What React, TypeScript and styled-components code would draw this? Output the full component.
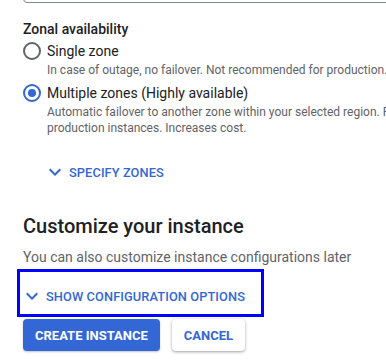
import React, { useState } from "react";
import styled, { createGlobalStyle } from "styled-components";

const GlobalStyle = createGlobalStyle`
	body {
		margin: 0;
		background: #ffffff;
		font-family: Roboto, "Liberation Sans", Arial, sans-serif;
		overflow: hidden;
	}
`;

const Page = styled.div`
	width: 386px;
	height: 364px;
	overflow: hidden;
	padding-left: 23px;
	box-sizing: border-box;
	color: #202124;
`;

const FieldEdge = styled.div`
	width: 520px;
	height: 36px;
	margin-top: -33px;
	border: 1px solid #80868b;
	border-radius: 4px;
	box-sizing: border-box;
	flex-shrink: 0;
`;

const Label = styled.div`
	margin-top: 16px;
	font-size: 14px;
	line-height: 20px;
	font-weight: 500;
`;

const Option = styled.label<{ $gap: number }>`
	display: flex;
	align-items: center;
	gap: 6px;
	margin-top: ${(p) => p.$gap}px;
	font-size: 14px;
	line-height: 20px;
	cursor: pointer;
	white-space: nowrap;
`;

const Radio = styled.span<{ $checked: boolean }>`
	width: 18px;
	height: 18px;
	border-radius: 50%;
	box-sizing: border-box;
	border: 2px solid ${(p) => (p.$checked ? "#3367d6" : "#5f6368")};
	display: flex;
	align-items: center;
	justify-content: center;

	&::after {
		content: "";
		width: 8px;
		height: 8px;
		border-radius: 50%;
		background: ${(p) => (p.$checked ? "#3367d6" : "transparent")};
	}
`;

const Hint = styled.div`
	margin-top: 1px;
	margin-left: 24px;
	width: 460px;
	font-size: 12px;
	line-height: 16px;
	color: #5f6368;
`;

const ExpandButton = styled.button<{ $outlined?: boolean }>`
	display: flex;
	align-items: center;
	gap: 2px;
	height: ${(p) => (p.$outlined ? "48px" : "36px")};
	padding: ${(p) => (p.$outlined ? "6px 16px 0 0" : "0 8px 0 0")};
	margin: ${(p) => (p.$outlined ? "2px 0 0 -6px" : "18px 0 0 20px")};
	border: ${(p) => (p.$outlined ? "3px solid #0000ff" : "none")};
	box-sizing: border-box;
	background: transparent;
	color: #3367d6;
	font-family: Roboto, "Liberation Sans", Arial, sans-serif;
	font-size: 12.8px;
	font-weight: 500;
	letter-spacing: 0.1px;
	text-transform: uppercase;
	cursor: pointer;
	align-self: flex-start;

	svg {
		width: 24px;
		height: 24px;
		fill: #3367d6;
		flex-shrink: 0;
	}
`;

const Heading = styled.h2`
	margin: 22px 0 0;
	font-size: 20px;
	line-height: 28px;
	font-weight: 500;
`;

const Subtext = styled.p`
	margin: 7px 0 0;
	font-size: 14px;
	line-height: 20px;
	color: #5f6368;
`;

const Actions = styled.div`
	display: flex;
	gap: 12px;
	margin-top: 2px;
`;

const ActionButton = styled.button<{ $primary?: boolean }>`
	height: 32px;
	padding: 0 12px;
	border: none;
	border-radius: 4px;
	font-family: Roboto, "Liberation Sans", Arial, sans-serif;
	font-size: 13px;
	font-weight: 700;
	letter-spacing: 0;
	text-transform: uppercase;
	cursor: pointer;
	background: ${(p) => (p.$primary ? "#3367d6" : "#ffffff")};
	color: ${(p) => (p.$primary ? "#ffffff" : "#3367d6")};
	box-shadow: ${(p) =>
		p.$primary
			? "0 1px 2px rgba(60,64,67,0.3)"
			: "0 1px 2px rgba(60,64,67,0.3), 0 1px 3px 1px rgba(60,64,67,0.15)"};
`;

const Column = styled.div`
	display: flex;
	flex-direction: column;
`;

function Chevron() {
	return (
		<svg viewBox="0 0 24 24">
			<path d="M7.41 8.59L12 13.17l4.59-4.58L18 10l-6 6-6-6 1.41-1.41z" />
		</svg>
	);
}

export default function App() {
	const [zone, setZone] = useState<"single" | "multi">("multi");

	return (
		<Page>
			<GlobalStyle />
			<Column>
				<FieldEdge />
				<Label>Zonal availability</Label>
				<Option $gap={2} onClick={() => setZone("single")}>
					<Radio $checked={zone === "single"} />
					Single zone
				</Option>
				<Hint>In case of outage, no failover. Not recommended for production.</Hint>
				<Option $gap={5} onClick={() => setZone("multi")}>
					<Radio $checked={zone === "multi"} />
					Multiple zones (Highly available)
				</Option>
				<Hint>
					Automatic failover to another zone within your selected region. Recommended for production instances.
					Increases cost.
				</Hint>
				<ExpandButton>
					<Chevron />
					Specify zones
				</ExpandButton>
				<Heading>Customize your instance</Heading>
				<Subtext>You can also customize instance configurations later</Subtext>
				<ExpandButton $outlined>
					<Chevron />
					Show configuration options
				</ExpandButton>
				<Actions>
					<ActionButton $primary>Create instance</ActionButton>
					<ActionButton>Cancel</ActionButton>
				</Actions>
			</Column>
		</Page>
	);
}
